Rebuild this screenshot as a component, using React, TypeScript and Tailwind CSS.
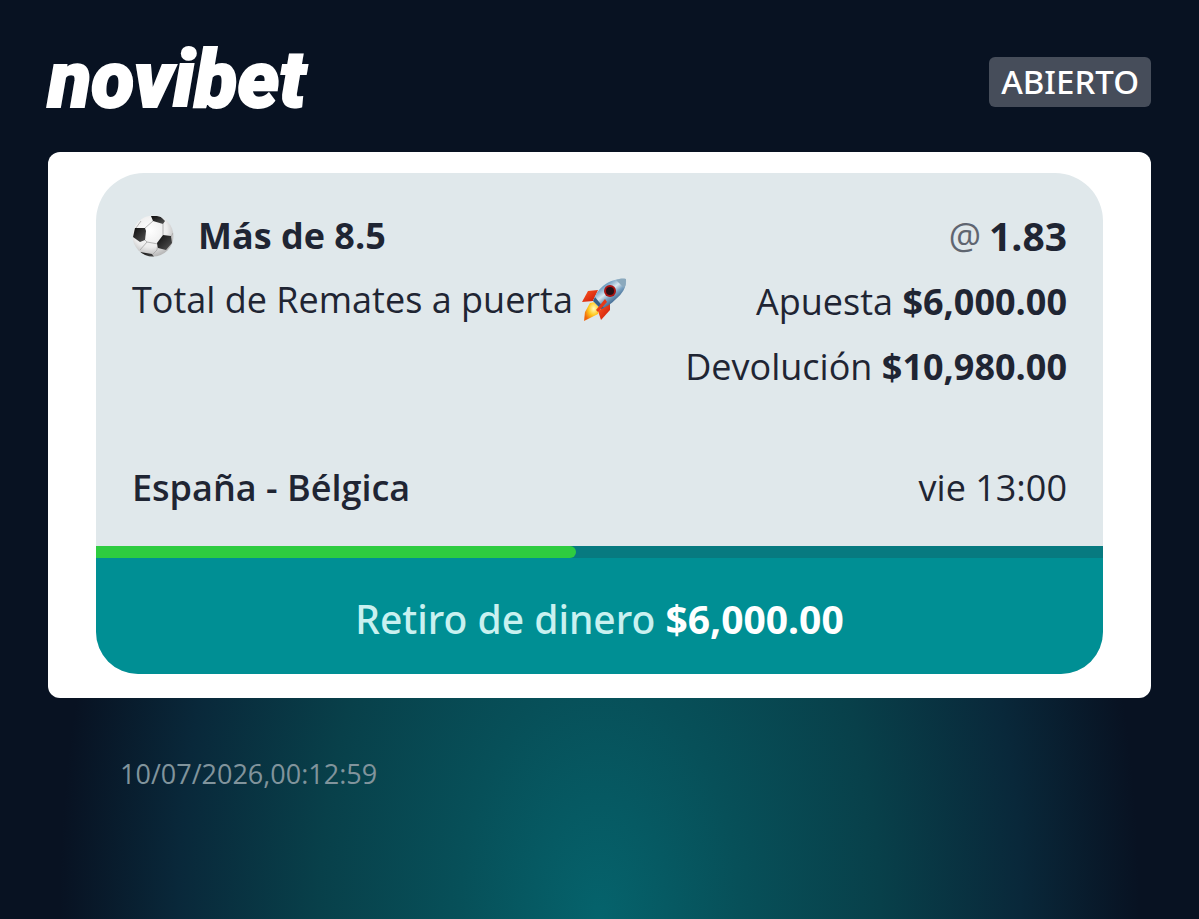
import { ReactNode } from 'react';

const bet = {
  status: 'ABIERTO',
  pick: 'Más de 8.5',
  market: 'Total de Remates a puerta',
  odds: '1.83',
  stake: '$6,000.00',
  payout: '$10,980.00',
  match: 'España - Bélgica',
  kickoff: 'vie 13:00',
  cashout: '$6,000.00',
  progress: 47.7,
  placedAt: '10/07/2026,00:12:59',
};

function SoccerBall() {
  return (
    <svg viewBox="0 0 42 42" className="size-[42px] shrink-0" aria-hidden="true">
      <defs>
        <radialGradient id="ball" cx="0.42" cy="0.35" r="0.65">
          <stop offset="0" stopColor="#ffffff" />
          <stop offset="0.65" stopColor="#ececec" />
          <stop offset="1" stopColor="#b9b9b9" />
        </radialGradient>
        <linearGradient id="patch" x1="0" y1="0" x2="1" y2="1">
          <stop offset="0" stopColor="#0c0c0c" />
          <stop offset="1" stopColor="#555555" />
        </linearGradient>
        <clipPath id="ballClip">
          <circle cx="21" cy="21" r="20.5" />
        </clipPath>
      </defs>
      <circle cx="21" cy="21" r="20.5" fill="url(#ball)" />
      <g clipPath="url(#ballClip)">
        <path
          d="M13 13L21 6M13 25l2 2M15 27l11 2M26 28l-1 7M25 35l-4 4M31 20l0-11M8 35l7-8M4 13l5-7M39 22l2-4"
          fill="none"
          stroke="#a5a5a5"
          strokeWidth="0.8"
        />
        <path d="M19 1l9 0 5 5-2 3-10-3z" fill="url(#patch)" />
        <path d="M3 13l10 0 1 3-1 9-5 2-7-5z" fill="url(#patch)" />
        <path d="M31 20l8 1 1 7-6 7-8-2-1-5z" fill="url(#patch)" />
        <path d="M8 37l12 2 3 4-10 0z" fill="url(#patch)" />
      </g>
    </svg>
  );
}

function Rocket() {
  return (
    <svg viewBox="0 0 46 44" className="h-[44px] w-[46px] shrink-0" aria-hidden="true">
      <defs>
        <linearGradient id="hull" x1="0.25" y1="0.2" x2="0.75" y2="0.8">
          <stop offset="0" stopColor="#4c86b3" />
          <stop offset="0.4" stopColor="#d9e6ee" />
          <stop offset="0.6" stopColor="#7ea5c4" />
          <stop offset="1" stopColor="#234d7a" />
        </linearGradient>
        <linearGradient id="fin" x1="0" y1="0" x2="1" y2="1">
          <stop offset="0" stopColor="#ff5a22" />
          <stop offset="1" stopColor="#c81508" />
        </linearGradient>
        <radialGradient id="flame" cx="0.65" cy="0.35" r="0.7">
          <stop offset="0" stopColor="#fffbc0" />
          <stop offset="0.5" stopColor="#ffc91e" />
          <stop offset="1" stopColor="#f0640b" />
        </radialGradient>
      </defs>
      <path d="M17 12L7 13 1 24l11-1z" fill="url(#fin)" />
      <path d="M29 25l0 7-9 10-3-9z" fill="url(#fin)" />
      <path d="M9 25l5-1 4 6-1 6-6 3-8 4 1-9z" fill="url(#flame)" />
      <path d="M45 1c1 8-4 15-10 20-5 5-10 8-15 10l-8-8c2-6 5-11 10-15C28 3 37 0 45 1z" fill="url(#hull)" />
      <path d="M45 1c-4-1-7 0-10 1l8 8c2-3 2-6 2-9z" fill="#8ba9bd" />
      <path d="M12 23l8 8 3-1-9-11z" fill="#345f87" />
      <circle cx="29" cy="13" r="6" fill="#a91412" />
      <circle cx="29" cy="13" r="4" fill="#250f16" />
      <path d="M24 21l-9 11 2 2 9-10z" fill="#e63918" />
    </svg>
  );
}

function Amount({ label, children }: { label: string; children: ReactNode }) {
  return (
    <p>
      {label} <strong className="font-bold">{children}</strong>
    </p>
  );
}

export default function App() {
  return (
    <main className="flex min-h-screen flex-col bg-[#081222] bg-[radial-gradient(540px_900px_at_50%_100%,#05636c_0%,#075059_26%,#08404a_52%,#09283a_78%,#081222_100%)] font-['Open_Sans',sans-serif]">
      <header className="flex h-[152px] items-start justify-between bg-[#081222] px-12">
        <h1 className="pt-9 font-['Roboto',sans-serif] text-[79px] leading-[88px] font-black text-white italic [-webkit-text-stroke:2px_white]">
          novibet
        </h1>
        <span className="mt-[57px] rounded-md bg-[#464d5a] px-3 font-['Noto_Sans',sans-serif] text-[33px] leading-[50px] font-medium text-white">
          {bet.status}
        </span>
      </header>

      <section className="mx-12 rounded-xl bg-white px-12 pt-[21px] pb-6">
        <article className="overflow-hidden rounded-t-[48px] rounded-b-[42px] bg-[#e0e8eb] text-[36px] text-[#1f2533]">
          <div className="flex justify-between px-9 pt-8 leading-[65px]">
            <div>
              <h2 className="flex items-center gap-6 font-bold leading-[62px]">
                <SoccerBall />
                {bet.pick}
              </h2>
              <p className="flex items-center gap-2">
                {bet.market}
                <Rocket />
              </p>
            </div>
            <div className="text-right">
              <p className="flex h-16 items-center justify-end gap-2 pb-1">
                <span className="text-[#5f6570]">@</span>
                <strong className="text-[39px] font-bold">{bet.odds}</strong>
              </p>
              <Amount label="Apuesta">{bet.stake}</Amount>
              <Amount label="Devolución">{bet.payout}</Amount>
            </div>
          </div>
          <div className="flex justify-between px-9 pt-[58px] pb-[27px] leading-[62px]">
            <span className="font-semibold">{bet.match}</span>
            <time>{bet.kickoff}</time>
          </div>
          <div className="h-3 bg-[#077a80]">
            <div className="h-full rounded-r-full bg-[#2ecc40]" style={{ width: `${bet.progress}%` }} />
          </div>
          <button
            type="button"
            className="block h-[116px] w-full bg-[#008f94] pt-1.5 font-['Noto_Sans',sans-serif] text-[39px] font-medium text-[#c9f1f0]"
          >
            Retiro de dinero <strong className="font-bold text-white">{bet.cashout}</strong>
          </button>
        </article>
      </section>

      <footer className="px-[120px] pt-14 text-[27px] leading-10 text-[#81949c]">{bet.placedAt}</footer>
    </main>
  );
}
